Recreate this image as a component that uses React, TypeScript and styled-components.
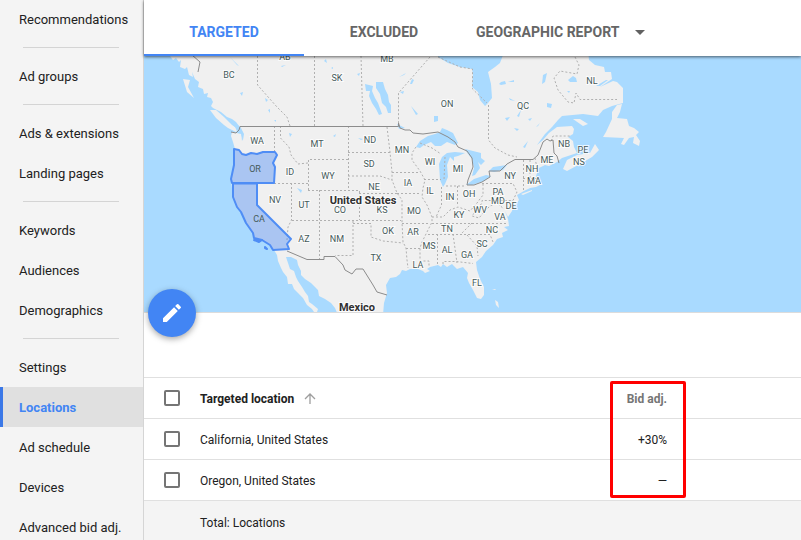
import React from "react";
import styled, { createGlobalStyle, css } from "styled-components";

const GlobalStyle = createGlobalStyle`
  * { box-sizing: border-box; }
  body {
    margin: 0;
    font-family: Roboto, "Liberation Sans", sans-serif;
    font-size: 12px;
    color: #212121;
    background: #fff;
  }
`;

const Page = styled.div`
  display: flex;
  height: 100vh;
  overflow: hidden;
`;

const Sidebar = styled.nav`
  flex: 0 0 144px;
  overflow: hidden;
  background: #f4f4f4;
  border-right: 1px solid #d5d5d5;
`;

const NavList = styled.ul`
  list-style: none;
  margin: -1px 0 0;
  padding: 0;
`;

const NavLink = styled.a<{ $active?: boolean }>`
  display: flex;
  align-items: center;
  height: 40px;
  padding-left: 16px;
  border-left: 3px solid transparent;
  font-size: 13px;
  white-space: nowrap;
  color: #212121;
  text-decoration: none;
  ${(p) =>
    p.$active &&
    css`
      border-left-color: #3b78e7;
      background: #e0e0e0;
      color: #4285f4;
      font-weight: 700;
    `}
`;

const NavDivider = styled.li`
  height: 1px;
  margin: 8px 24px 8px 23px;
  background: #d4d4d4;
`;

const Main = styled.main`
  flex: 1;
  min-width: 0;
  display: flex;
  flex-direction: column;
`;

const TabBar = styled.div`
  position: relative;
  z-index: 1;
  display: flex;
  flex: none;
  padding-top: 8px;
  background: #fff;
  box-shadow: 0 1px 3px rgba(0, 0, 0, 0.6);
`;

const Tab = styled.button<{ $active?: boolean; $menu?: boolean }>`
  display: flex;
  align-items: center;
  justify-content: center;
  gap: 16px;
  width: ${(p) => (p.$menu ? "auto" : "160px")};
  height: 48px;
  padding: ${(p) => (p.$menu ? "0 12px" : "0")};
  border: 0;
  background: none;
  font: 700 14px/20px Roboto, "Liberation Sans", sans-serif;
  color: ${(p) => (p.$active ? "#4285f4" : "#666")};
  box-shadow: ${(p) => (p.$active ? "inset 0 -2px #4285f4" : "none")};
`;

const MapSection = styled.section`
  position: relative;
  flex: none;
  height: 257px;
  border-bottom: 1px solid #dcdcdc;
  background: #a9daff;
`;

const MapCanvas = styled.svg`
  display: block;
  width: 100%;
  height: 100%;
`;

const EditButton = styled.button`
  position: absolute;
  left: 4px;
  bottom: -25px;
  display: grid;
  place-items: center;
  width: 48px;
  height: 48px;
  padding: 0;
  border: 0;
  border-radius: 50%;
  background: #4285f4;
  box-shadow: 0 2px 6px rgba(0, 0, 0, 0.35);
`;

const Toolbar = styled.div`
  flex: none;
  height: 64px;
`;

const Table = styled.table`
  width: 100%;
  table-layout: fixed;
  border-collapse: separate;
  border-spacing: 0;
  border-top: 1px solid #e0e0e0;
`;

const CheckCol = styled.col`
  width: 56px;
`;
const BidCol = styled.col`
  width: 76px;
`;
const TailCol = styled.col`
  width: 115px;
`;

const Cell = styled.td<{ $end?: boolean }>`
  height: 41px;
  padding: ${(p) => (p.$end ? "2px 19px 0 0" : "2px 0 0")};
  border-bottom: 1px solid #e0e0e0;
  text-align: ${(p) => (p.$end ? "right" : "left")};
  font-weight: 400;
  white-space: nowrap;
`;

const HeadCell = styled(Cell)`
  position: relative;
  font-weight: 700;
  color: ${(p) => (p.$end ? "#757575" : "#212121")};
`;

const CheckCell = styled(Cell)`
  padding: 0 0 0 20px;
`;

const FootCell = styled(Cell)`
  background: #f4f4f4;
  border-bottom: 0;
`;

const Filler = styled.div`
  flex: 1;
  background: #f4f4f4;
`;

const Checkbox = styled.input`
  appearance: none;
  display: block;
  width: 16px;
  height: 16px;
  margin: 0;
  border: 2px solid #757575;
  border-radius: 2px;
  background: #fff;
`;

const SortLabel = styled.span`
  display: flex;
  align-items: center;
  gap: 10px;
`;

const Highlight = styled.span`
  position: absolute;
  top: 3px;
  left: 0;
  right: 0;
  height: 117px;
  border: 3px solid #f00;
  border-radius: 2px;
  pointer-events: none;
`;

const Land = styled.path`
  fill: #f0f0f0;
`;
const Water = styled.path`
  fill: #a9daff;
`;
const StateLine = styled.path`
  fill: none;
  stroke: #b0b0b0;
  stroke-dasharray: 2 2;
`;
const CountryLine = styled.path`
  fill: none;
  stroke: #8c8c8c;
  stroke-linejoin: round;
`;
const Selected = styled.path`
  fill: rgba(66, 133, 244, 0.4);
  stroke: #4f8df5;
  stroke-width: 2;
  stroke-linejoin: round;
`;
const MapLabel = styled.text<{ $country?: boolean; $plain?: boolean }>`
  font-family: Roboto, "Liberation Sans", sans-serif;
  font-size: ${(p) => (p.$country ? 11 : 9)}px;
  font-weight: ${(p) => (p.$country ? 700 : 400)};
  fill: ${(p) => (p.$country ? "#303030" : "#455a5a")};
  stroke: ${(p) => (p.$plain ? "none" : "rgba(255, 255, 255, 0.8)")};
  stroke-width: 2px;
  paint-order: stroke;
  text-anchor: middle;
`;

const NAV: string[][] = [
  ["Recommendations"],
  ["Ad groups"],
  ["Ads & extensions", "Landing pages"],
  ["Keywords", "Audiences", "Demographics"],
  ["Settings", "Locations", "Ad schedule", "Devices", "Advanced bid adj."],
];

const ROWS = [
  { place: "California, United States", bid: "+30%" },
  { place: "Oregon, United States", bid: "—" },
];

const LABELS: [string, number, number][] = [
  ["BC", 229, 78], ["AB", 285, 60], ["SK", 337, 81], ["MB", 387, 62],
  ["ON", 447, 107], ["QC", 523, 109], ["NL", 592, 84], ["WA", 257, 144],
  ["MT", 317, 147], ["ID", 290, 175], ["ND", 370, 143], ["MN", 402, 153],
  ["SD", 369, 167], ["WI", 430, 165], ["MI", 458, 172], ["WY", 328, 179],
  ["NE", 374, 190], ["IA", 408, 186], ["NV", 275, 203], ["UT", 304, 208],
  ["CO", 340, 213], ["KS", 382, 213], ["MO", 414, 214], ["IL", 430, 194],
  ["IN", 450, 200], ["OH", 469, 197], ["KY", 459, 218], ["WV", 480, 213],
  ["AZ", 304, 242], ["NM", 337, 242], ["OK", 388, 234], ["AR", 413, 235],
  ["TN", 447, 232], ["TX", 376, 261], ["MS", 429, 249], ["AL", 447, 253],
  ["GA", 467, 258], ["SC", 482, 247], ["LA", 418, 268], ["FL", 477, 286],
  ["NC", 492, 233], ["VA", 500, 220], ["MD", 498, 204], ["DE", 511, 209],
  ["PA", 498, 195], ["NY", 510, 179], ["MA", 534, 184], ["NH", 532, 172],
  ["ME", 547, 163], ["NB", 564, 147], ["PE", 583, 153], ["NS", 579, 165],
];

const MAINLAND =
  "M170 56L173 60L176 58L179 62L181 60L180 67L185 69L187 67L189 75L193 77L192 72L195 79L199 82L198 87L203 89L204 94L208 93L207 97L211 98L213 102L211 106L213 108L221 112L227 117L232 119L236 122L239 126L241 128L244 134L243 140L241 134L232 132L231 136L233 142L235 149" +
  "L234 165L231 179L233 197L237 207L241 212L246 223L253 233L254 238L262 240L270 245L274 250L277 255L278 261L281 268L283 272L287 277L288 284L292 284L294 289L298 293L303 298L307 305L312 309L316 315" +
  "L318 309L312 304L309 302L308 296L305 292L302 287L298 281L296 277L294 271L290 269L288 263L286 257L291 257L297 260L298 265L301 271L301 275L305 279L311 283L315 287L318 290L319 296L325 299L331 303L335 308L338 315" +
  "L383 315L384 303L387 293L386 285L390 278L396 277L400 274L402 270L406 271L410 269L418 269L423 271L425 273L430 271L427 269L430 267L438 265L441 267L443 264L447 267L452 264L457 269L463 267L468 273L467 278L469 283L473 290L475 294L477 298L481 299L484 295L484 287L480 279L477 270L476 262L482 257L486 251L493 245L497 239L503 237L502 233L508 230L504 227L509 226L508 219L505 211L508 217L512 211L513 206L511 200L515 205L519 200L517 195L524 191L530 188L536 187L542 184L538 180L536 176L539 168L545 165L549 166L557 162L562 158L568 156L577 153L574 147L573 141L568 137L573 134L574 129L572 126L557 127L549 133L543 140L537 145" +
  "L545 134L552 127L558 120L562 116L583 114L598 116L603 110L612 106L623 103L623 88L617 82L613 81L600 87L612 79L611 72L605 72L604 67L595 65L589 60L588 50L170 50Z";

const ISLANDS =
  "M210 110L216 110L224 117L232 125L238 129L236 132L228 128L224 125L216 118Z" +
  "M183 79L190 80L188 87L194 98L187 92Z" +
  "M573 119L580 119L588 124L583 126Z" +
  "M563 169L567 160L577 155L590 153L595 144L599 150L592 157L580 164L567 171Z" +
  "M617 105L622 104L620 112L617 118L627 119L629 126L634 128L639 132L636 135L640 141L639 146L633 143L634 137L629 138L624 145L621 144L624 138L603 137L606 132L612 119L612 112Z" +
  "M521 194L532 190L532 191L523 195ZM492 289L496 289L495 290ZM495 300L498 302L499 308L496 305Z";

const LAKES =
  "M439 50L438 57L448 63L460 67L472 69L473 74L472 87L478 92L480 100L485 106L488 103L492 98L491 84L488 72L495 67L500 63L505 50Z" +
  "M416 147L420 141L428 136L435 134L440 132L442 128L447 130L453 133L458 143L455 145L447 142L441 146L435 146L431 142L424 145L420 148Z" +
  "M439 164L442 157L447 153L455 152L465 153L458 156L454 157L454 161L450 157L447 165L448 177L445 184L443 187L440 180Z" +
  "M465 149L473 151L481 153L481 158L485 161L481 165L478 162L480 168L475 175L472 176L474 168L472 159L468 154Z" +
  "M466 185L474 179L486 175L491 176L484 181L472 185ZM489 171L493 167L507 165L503 170L494 172Z" +
  "M376 82L383 82L385 89L388 95L389 102L391 105L391 113L388 113L386 107L382 103L380 94L376 88Z" +
  "M365 84L373 86L372 91L375 98L378 103L382 114L379 115L376 109L372 103L369 96L370 91L366 91Z" +
  "M434 116L438 116L438 121L434 122ZM400 92L404 91L403 94ZM410 84L412 79L414 80L412 84ZM399 77L406 73L404 75Z" +
  "M411 106L418 114L416 115ZM397 124L405 128L399 129ZM230 57L239 66L237 65ZM281 66L286 65L282 67Z" +
  "M226 118L233 122L239 126L241 131L238 133L235 127ZM241 132L243 139L242 141ZM240 93L243 92L242 96ZM265 98L268 100L266 102ZM268 110L270 109L270 113ZM274 120L276 120L276 122ZM289 133L292 134L290 137ZM297 188L302 190L301 193Z" +
  "M324 61L326 59L327 63ZM331 68L333 67L333 69ZM357 74L360 73L359 76ZM333 136L336 134L335 137ZM358 138L363 139L361 140Z" +
  "M499 84L501 82L505 81L506 84L501 85ZM508 82L514 80L514 82ZM543 75L547 73L545 82L542 84ZM547 103L552 104L551 108L547 107ZM505 118L510 117L507 121ZM517 116L521 110L519 117ZM568 80L573 76L576 78L577 82L570 82ZM567 91L570 91L569 93ZM528 119L532 118L530 121ZM514 128L519 129L517 131ZM523 147L528 141L525 148ZM536 127L540 123L538 126ZM509 98L515 101L510 100ZM596 86L606 80L608 80L600 86Z";

const STATES =
  "M257.500 56V85L269 98L277 107L287 117L290 126M314.500 56V126M361 56L363 126M430 57L398.500 93V123" +
  "M438 57L460 67L472.500 69V89L487 103M488.500 105V140L495 148L508 155L517 157" +
  "M575 57L579 65L577 74L560 71L554 78L558 90L568 102L574 103L576 93L580 99.500H617" +
  "M551 141L553 136L571 136M274.500 126V152M280.500 126V138L289 147L291 155L298 164L308 163" +
  "M308.500 190V159.500H348M348.500 126V190.500M274 183.500H308M291.500 183V220L288 227L287 240M308 190.500H359.500V220" +
  "M292 220.500H401M319.500 190V259M359 193.500H397M348 152.500H391M348 176H380L392 180" +
  "M387 127L390 152L392 172V180L397 193L402 200V222L403 242L406 248L407 260L408 268M392 172.500H420" +
  "M416 147L412 153L412 160L420 171L425 180L423 188L422 197L427 205L432 217V222L427 232L422 242L420 248V261H429V267" +
  "M397 193.500H420M424 179.500H441M420 143L432 148L441 154M445 157L444 180M406 248.500H420M402 223.500H429M437.500 234V264M453 234L457 263M428 234.500H490L493 242" +
  "M432 223.500H508M441.500 187V205L436 217M457.500 186V206M432 217H443L450 210L458 207L470 211L477 203L483 195V183" +
  "M446 186H466M482 183.500H513L517 192L513 200.500H482V203L472 216L479 218L485 211L490 206L497 203L504 209" +
  "M523.500 160V190M530 160V180M535 158L538 173M523 178.500H538M472 223L462 233M467 235L477 246L478 256M443 264V261.500H456L473 263.500" +
  "M353 221V255.500H335M353 223.500H371V237L383 241L403 243";

const US_CANADA =
  "M231 132L236 133L239 130L240 126.500H398.500V123L400 128L405 130L410 130L413 133L423 134L438 132L448 137L455 142L458 147L467 151L472 158L473 167L468 180L467 185H474L482 182L490 177L489 171H500L507 164L515 159.500H533L538 155L543 142L547 139L550 141L553 140L554 153L557 156L559 163M192 55L200 62L198 72";
const US_MEXICO =
  "M287 251L307 259.500H324V256.500H335L343 265L345 270L352 274L356 269H363L373 285L377 292L387 295";

const OREGON =
  "M234 149L239 150L242 154L246 155L251 153L257 154L263 152L275 152L277 155L273 163L275 167L274 183H232L231 179L234 165Z";
const CALIFORNIA =
  "M233 183.500H257V205L291 239L287 244L289 249L273 250L270 245L262 240L254 238L253 233L246 223L241 212L237 207L233 197Z";
const CHANNEL_ISLANDS = "M254 240L262 240L259 242ZM265 247L267 249L265 248Z";

function LocationMap() {
  return (
    <MapCanvas viewBox="144 56 657 256" preserveAspectRatio="xMinYMin slice" role="img" aria-label="Map of targeted locations">
      <Land d={MAINLAND} />
      <Land d={ISLANDS} />
      <Water d={LAKES} />
      <StateLine d={STATES} />
      <CountryLine d={US_CANADA} />
      <CountryLine d={US_MEXICO} />
      {LABELS.map(([name, x, y]) => (
        <MapLabel key={name} x={x} y={y}>{name}</MapLabel>
      ))}
      <MapLabel $country x={363} y={204}>United States</MapLabel>
      <MapLabel $country x={357} y={311}>Mexico</MapLabel>
      <Selected d={OREGON} />
      <Selected d={CALIFORNIA} />
      <Selected d={CHANNEL_ISLANDS} />
      <MapLabel $plain x={255} y={172}>OR</MapLabel>
      <MapLabel $plain x={259} y={222}>CA</MapLabel>
    </MapCanvas>
  );
}

export default function App() {
  return (
    <Page>
      <GlobalStyle />
      <Sidebar aria-label="Campaign sections">
        <NavList>
          {NAV.map((group, i) => (
            <React.Fragment key={group[0]}>
              {i > 0 && <NavDivider role="separator" />}
              {group.map((item) => (
                <li key={item}>
                  <NavLink href="#" $active={item === "Locations"}>{item}</NavLink>
                </li>
              ))}
            </React.Fragment>
          ))}
        </NavList>
      </Sidebar>
      <Main>
        <TabBar>
          <Tab $active>TARGETED</Tab>
          <Tab>EXCLUDED</Tab>
          <Tab $menu>
            GEOGRAPHIC REPORT
            <svg width="10" height="5" viewBox="0 0 10 5" aria-hidden="true">
              <path d="M0 0h10L5 5z" fill="#616161" />
            </svg>
          </Tab>
        </TabBar>
        <MapSection>
          <LocationMap />
          <EditButton aria-label="Edit locations">
            <svg width="24" height="24" viewBox="0 0 24 24" aria-hidden="true">
              <path
                fill="#fff"
                d="M3 17.250V21h3.750L17.810 9.940l-3.750-3.750L3 17.250zM20.710 7.040a1 1 0 0 0 0-1.410l-2.340-2.340a1 1 0 0 0-1.410 0l-1.830 1.830 3.750 3.750 1.830-1.830z"
              />
            </svg>
          </EditButton>
        </MapSection>
        <Toolbar />
        <Table>
          <colgroup>
            <CheckCol />
            <col />
            <BidCol />
            <TailCol />
          </colgroup>
          <thead>
            <tr>
              <CheckCell as="th">
                <Checkbox type="checkbox" aria-label="Select all locations" />
              </CheckCell>
              <HeadCell as="th" scope="col">
                <SortLabel>
                  Targeted location
                  <svg width="12" height="12" viewBox="0 0 12 12" aria-hidden="true">
                    <path d="M6 11V1.500M1 6L6 1l5 5" fill="none" stroke="#9e9e9e" strokeWidth="1.300" />
                  </svg>
                </SortLabel>
              </HeadCell>
              <HeadCell as="th" scope="col" $end>
                Bid adj.
                <Highlight />
              </HeadCell>
              <Cell />
            </tr>
          </thead>
          <tbody>
            {ROWS.map((row) => (
              <tr key={row.place}>
                <CheckCell>
                  <Checkbox type="checkbox" aria-label={`Select ${row.place}`} />
                </CheckCell>
                <Cell>{row.place}</Cell>
                <Cell $end>{row.bid}</Cell>
                <Cell />
              </tr>
            ))}
          </tbody>
          <tfoot>
            <tr>
              <FootCell />
              <FootCell colSpan={3}>Total: Locations</FootCell>
            </tr>
          </tfoot>
        </Table>
        <Filler />
      </Main>
    </Page>
  );
}
